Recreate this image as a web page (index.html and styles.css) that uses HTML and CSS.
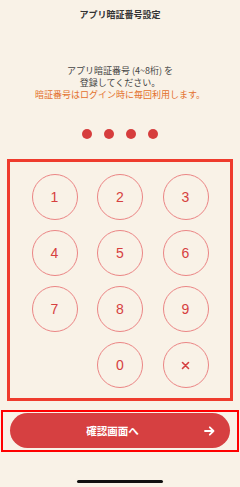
FILE: index.html
```html
<!DOCTYPE html>
<html lang="ja">
<head>
<meta charset="utf-8">
<link rel="stylesheet" href="styles.css">
</head>
<body>
<div class="screen">
  <header class="title">アプリ暗証番号設定</header>
  <p class="intro">アプリ暗証番号 (4~8桁) を<br>登録してください。<br><span class="note">暗証番号はログイン時に毎回利用します。</span></p>
  <div class="dots"><span></span><span></span><span></span><span></span></div>
  <div class="keypad-frame">
    <div class="keypad">
      <button class="key">1</button>
      <button class="key">2</button>
      <button class="key">3</button>
      <button class="key">4</button>
      <button class="key">5</button>
      <button class="key">6</button>
      <button class="key">7</button>
      <button class="key">8</button>
      <button class="key">9</button>
      <span class="key-empty"></span>
      <button class="key">0</button>
      <button class="key key-del"><svg width="9" height="9" viewBox="0 0 9 9"><path d="M1.5 1.5 L7.5 7.5 M7.5 1.5 L1.5 7.5" stroke="#d64040" stroke-width="1.6" stroke-linecap="round"/></svg></button>
    </div>
  </div>
  <div class="cta-frame">
    <button class="cta"><span class="cta-spacer"></span><span class="cta-label">確認画面へ</span><span class="cta-arrow"><svg width="11" height="10" viewBox="0 0 11 10"><path d="M1 5 H9.5 M5.8 1.3 L9.5 5 L5.8 8.7" fill="none" stroke="#fff" stroke-width="1.8" stroke-linecap="round" stroke-linejoin="round"/></svg></span></button>
  </div>
  <div class="home-indicator"></div>
</div>
</body>
</html>
```
FILE: styles.css
```css
* { box-sizing: border-box; }
html, body { margin: 0; padding: 0; }
body {
  background: #f9f2e7;
  font-family: "Noto Sans CJK JP", "Noto Sans", sans-serif;
  width: 240px;
  height: 487px;
  overflow: hidden;
}
.screen {
  display: flex;
  flex-direction: column;
  align-items: stretch;
  height: 487px;
}
.title {
  height: 30px;
  line-height: 30px;
  text-align: center;
  font-size: 9px;
  font-weight: 700;
  color: #333;
}
.intro {
  margin: 35px 0 0;
  text-align: center;
  font-size: 9px;
  line-height: 12px;
  color: #444;
}
.note { color: #e3702c; }
.dots {
  margin-top: 28px;
  display: flex;
  justify-content: center;
  gap: 12px;
  height: 10px;
}
.dots span {
  width: 10px;
  height: 10px;
  border-radius: 50%;
  background: #d63d3d;
}
.keypad-frame {
  margin: 20px 7px 0;
  height: 242px;
  border: 3px solid #ef3b2d;
  padding-top: 12px;
  display: flex;
  justify-content: center;
}
.keypad {
  display: grid;
  grid-template-columns: repeat(3, 46px);
  grid-auto-rows: 46px;
  column-gap: 19.5px;
  row-gap: 10px;
}
.key {
  width: 46px;
  height: 46px;
  border-radius: 50%;
  border: 1px solid #eb8585;
  background: transparent;
  color: #d64040;
  font-family: "Liberation Sans", "Noto Sans", sans-serif;
  font-size: 14px;
  font-weight: 400;
  display: flex;
  align-items: center;
  justify-content: center;
  padding: 0;
}
.cta-frame {
  margin: 9px 1px 0;
  height: 42px;
  border: 2px solid #ff0000;
  padding: 1px 7px 0;
}
.cta {
  width: 100%;
  height: 35px;
  border: none;
  border-radius: 18px;
  background: #d64041;
  color: #fff;
  font-family: "Noto Sans CJK JP", sans-serif;
  font-size: 10.5px;
  font-weight: 700;
  display: grid;
  grid-template-columns: 1fr auto 1fr;
  align-items: center;
  padding: 0 15px 0 0;
}
.cta-arrow {
  justify-self: end;
  display: flex;
  align-items: center;
}
.home-indicator {
  margin: 28px auto 0;
  width: 86px;
  height: 3px;
  border-radius: 2px;
  background: #111;
}
```
